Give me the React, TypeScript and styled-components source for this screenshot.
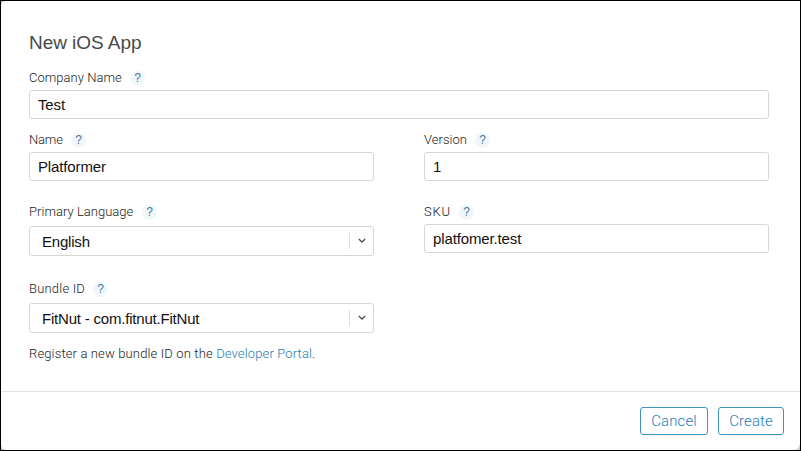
import React from "react";
import styled, { createGlobalStyle } from "styled-components";

const GlobalStyle = createGlobalStyle`
  *, *::before, *::after { box-sizing: border-box; }
  html, body { margin: 0; padding: 0; }
  body { background: #000; font-family: Roboto, "Liberation Sans", sans-serif; }
`;

const Frame = styled.div`
  width: 801px;
  height: 451px;
  padding: 1px;
  background: #000;
`;

const Backdrop = styled.div`
  height: 449px;
  background: #d2d2d2;
`;

const Dialog = styled.section`
  display: flex;
  flex-direction: column;
  height: 449px;
  background: #fff;
  border-radius: 5px 0 7px 6px;
`;

const Content = styled.div`
  height: 390px;
  padding: 30px 31px 0 28px;
`;

const Title = styled.h1`
  margin: 0 0 15px;
  height: 24px;
  line-height: 24px;
  font-family: "Liberation Sans", Arial, sans-serif;
  font-size: 19px;
  font-weight: 400;
  letter-spacing: -0.05px;
  color: #494949;
`;

const Columns = styled.div`
  display: grid;
  grid-template-columns: 345px 345px;
  column-gap: 50px;
  margin-top: 13px;
`;

const Field = styled.div<{ $height?: number }>`
  height: ${(p) => (p.$height ? `${p.$height}px` : "auto")};
`;

const LabelRow = styled.div<{ $gap?: number }>`
  display: flex;
  align-items: center;
  height: 16px;
  margin-bottom: ${(p) => p.$gap ?? 4}px;
`;

const Label = styled.label<{ $width: number; $spacing: number }>`
  width: ${(p) => p.$width}px;
  white-space: nowrap;
  font-weight: 300;
  font-size: 13px;
  line-height: 16px;
  letter-spacing: ${(p) => p.$spacing}px;
  color: #222;
`;

const Help = styled.span`
  display: flex;
  align-items: center;
  justify-content: center;
  width: 15px;
  height: 15px;
  margin-left: 8px;
  border-radius: 50%;
  background: #eff7fa;
  font-family: "Liberation Sans", Arial, sans-serif;
  font-size: 12px;
  line-height: 15px;
  color: #4779a6;
`;

const Input = styled.input`
  display: block;
  width: 100%;
  height: 29px;
  padding: 0 8px;
  border: 1px solid #d6d6d6;
  border-radius: 3px;
  outline: none;
  background: #fff;
  font: 15px "Liberation Sans", Arial, sans-serif;
  letter-spacing: -0.13px;
  color: #111;
`;

const Select = styled.div`
  display: flex;
  align-items: center;
  height: 30px;
  padding: 1px 7px 0 12px;
  border: 1px solid #d6d6d6;
  border-radius: 3px;
  font-family: "Liberation Sans", Arial, sans-serif;
  font-size: 15px;
  letter-spacing: -0.2px;
  color: #111;
`;

const SelectValue = styled.span`
  flex: 1;
  white-space: nowrap;
`;

const Arrow = styled.span`
  display: flex;
  align-items: center;
  width: 17px;
  height: 16px;
  margin-top: -1px;
  padding-left: 8px;
  border-left: 1px solid #dedede;
`;

const Note = styled.p`
  margin: 13px 0 0;
  font-weight: 300;
  font-size: 13px;
  line-height: 16px;
  letter-spacing: 0.14px;
  color: #222;
`;

const Link = styled.a`
  color: #1f7db8;
  text-decoration: none;
`;

const Footer = styled.footer`
  display: flex;
  justify-content: flex-end;
  gap: 10px;
  height: 59px;
  padding: 15px 16px 0 0;
  border-top: 1px solid #e3e3e3;
`;

const Button = styled.button<{ $width: number }>`
  width: ${(p) => p.$width}px;
  height: 28px;
  padding: 0 0 1px;
  border: 1px solid #4293c5;
  border-radius: 3px;
  background: #fff;
  font: 300 15px Roboto, "Liberation Sans", sans-serif;
  letter-spacing: 0.1px;
  color: #1f7db8;
`;

type FieldLabelProps = { text: string; width: number; gap?: number; spacing?: number };

function FieldLabel({ text, width, gap, spacing = 0.03 }: FieldLabelProps) {
  return (
    <LabelRow $gap={gap}>
      <Label $width={width} $spacing={spacing}>{text}</Label>
      <Help>?</Help>
    </LabelRow>
  );
}

function Dropdown({ value }: { value: string }) {
  return (
    <Select>
      <SelectValue>{value}</SelectValue>
      <Arrow>
        <svg width="8" height="6" viewBox="0 0 8 6" fill="none">
          <path d="M0.8 1L4 4L7.2 1" stroke="#41525f" strokeWidth="1.3" />
        </svg>
      </Arrow>
    </Select>
  );
}

export default function App() {
  return (
    <Frame>
      <GlobalStyle />
      <Backdrop>
        <Dialog>
          <Content>
            <Title>New iOS App</Title>
            <Field>
              <FieldLabel text="Company Name" width={93} />
              <Input defaultValue="Test" />
            </Field>
            <Columns>
              <div>
                <Field $height={72}>
                  <FieldLabel text="Name" width={34} spacing={-0.2} />
                  <Input defaultValue="Platformer" />
                </Field>
                <Field $height={77}>
                  <FieldLabel text="Primary Language" width={105} gap={6} />
                  <Dropdown value="English" />
                </Field>
                <Field>
                  <FieldLabel text="Bundle ID" width={56} gap={6} spacing={0.2} />
                  <Dropdown value="FitNut - com.fitnut.FitNut" />
                  <Note>
                    Register a new bundle ID on the <Link>Developer Portal</Link>.
                  </Note>
                </Field>
              </div>
              <div>
                <Field $height={72}>
                  <FieldLabel text="Version" width={43} />
                  <Input defaultValue="1" />
                </Field>
                <Field>
                  <FieldLabel text="SKU" width={27} spacing={0.8} />
                  <Input defaultValue="platfomer.test" />
                </Field>
              </div>
            </Columns>
          </Content>
          <Footer>
            <Button $width={68}>Cancel</Button>
            <Button $width={66}>Create</Button>
          </Footer>
        </Dialog>
      </Backdrop>
    </Frame>
  );
}
